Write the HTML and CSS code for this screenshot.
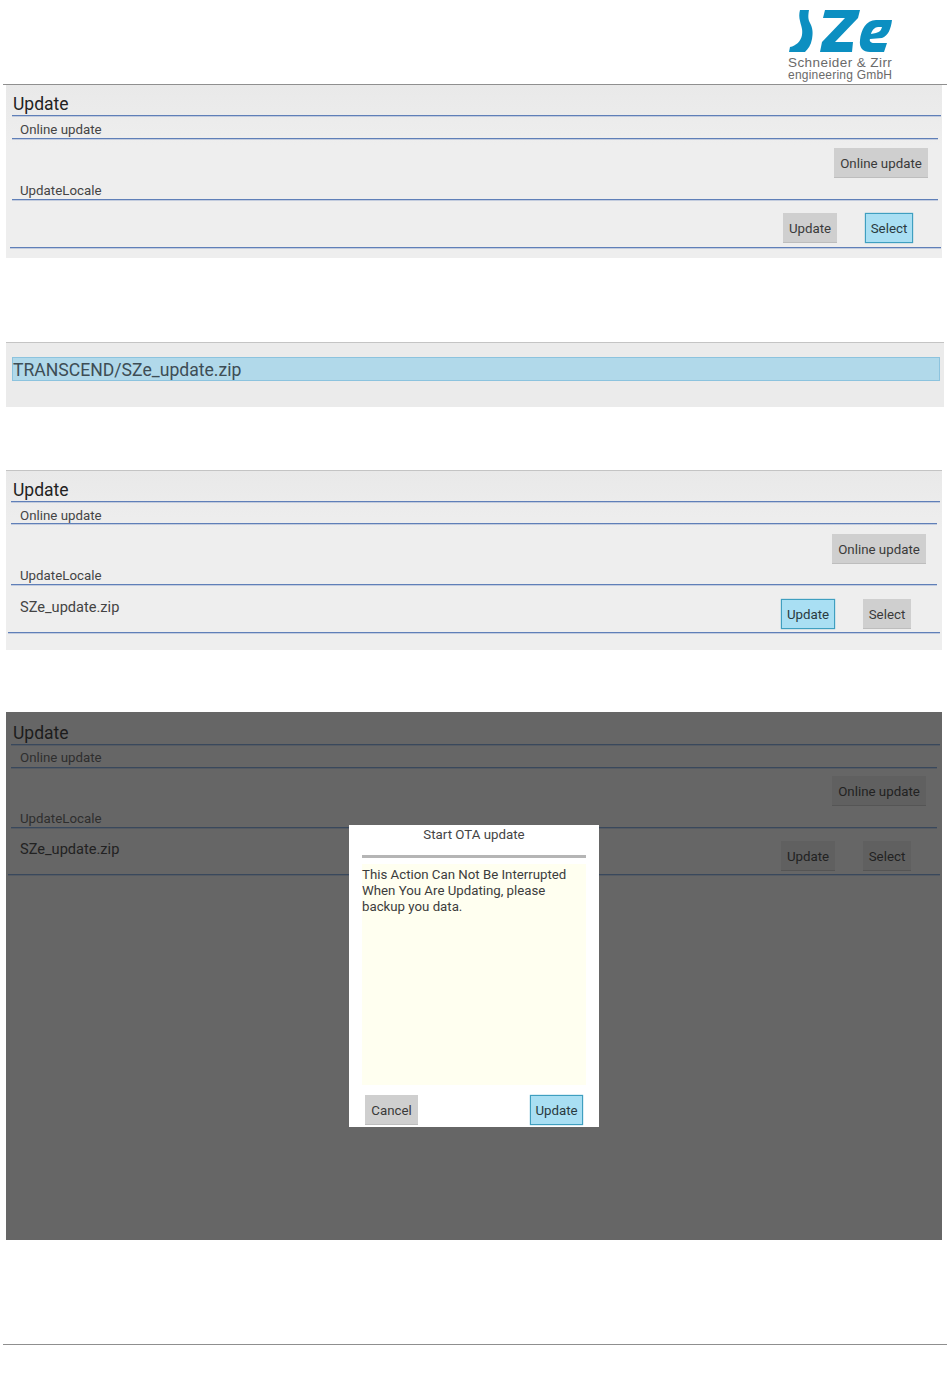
FILE: index.html
```html
<!DOCTYPE html>
<html lang="en">
<head>
<meta charset="utf-8">
<title>Update</title>
<link rel="stylesheet" href="styles.css">
</head>
<body>
<header class="doc-head">
  <div class="logo">
    <svg class="logo-mark" viewBox="0 0 106 42" width="106" height="42" aria-hidden="true">
      <path class="logo-fill" d="M12 0H21C20 6 20 9 22 13C25 18 25 24 24 29C23 35 20 39 17 42H1L2 37C8 36 13 31 14 25C15 19 13 16 12 11C11 7 11 4 12 0Z"/>
      <path class="logo-fill" d="M37 0H72L70 8L47 32H65L64 42H32L34 32L57 8H35Z"/>
      <path class="logo-fill" fill-rule="evenodd" d="M104 10H88C78 10 73 20 72 30C71 38 75 42 82 42H96L99 33H86C83 33 81 31 82 29L94 28C100 26 103 19 104 10ZM94 17C93 21 91 22 88 23L83 24C84 20 87 17 90 17Z"/>
    </svg>
    <div class="logo-name">Schneider &amp; Zirr</div>
    <div class="logo-sub">engineering GmbH</div>
  </div>
</header>

<section class="shot shot-first">
  <h1 class="title">Update</h1>
  <h2 class="sub sub-first">Online update</h2>
  <div class="row row-online"><span class="btn">Online update</span></div>
  <h2 class="sub">UpdateLocale</h2>
  <div class="row row-local">
    <span class="file"></span>
    <span class="btn btn-update">Update</span>
    <span class="btn btn-select btn-on">Select</span>
  </div>
</section>

<section class="shot-path">
  <div class="path-bar">TRANSCEND/SZe_update.zip</div>
</section>

<section class="shot shot-second">
  <h1 class="title">Update</h1>
  <h2 class="sub sub-first">Online update</h2>
  <div class="row row-online"><span class="btn">Online update</span></div>
  <h2 class="sub">UpdateLocale</h2>
  <div class="row row-local">
    <span class="file">SZe_update.zip</span>
    <span class="btn btn-update btn-on">Update</span>
    <span class="btn btn-select">Select</span>
  </div>
</section>

<section class="shot shot-dark">
  <h1 class="title">Update</h1>
  <h2 class="sub sub-first">Online update</h2>
  <div class="row row-online"><span class="btn">Online update</span></div>
  <h2 class="sub">UpdateLocale</h2>
  <div class="row row-local">
    <span class="file">SZe_update.zip</span>
    <span class="btn btn-update">Update</span>
    <span class="btn btn-select">Select</span>
  </div>
  <div class="dialog">
    <div class="dialog-title">Start OTA update</div>
    <div class="dialog-rule"></div>
    <div class="dialog-body">This Action Can Not Be Interrupted When You Are Updating, please backup you data.</div>
    <div class="dialog-actions">
      <span class="btn btn-cancel">Cancel</span>
      <span class="btn btn-update btn-on">Update</span>
    </div>
  </div>
</section>

<footer class="doc-foot"></footer>
</body>
</html>
```
FILE: styles.css
```css
* { box-sizing: border-box; }
html, body { margin: 0; padding: 0; }
body {
  width: 950px;
  height: 1378px;
  overflow: hidden;
  background: #fff;
  font-family: Roboto, "Liberation Sans", sans-serif;
  color: #3c3c3c;
}

.doc-head {
  height: 85px;
  margin: 0 3px;
  border-bottom: 1px solid #8f8f8f;
  display: flex;
  justify-content: flex-end;
  padding: 10px 53px 0 0;
}
.logo { width: 106px; color: #6a6a6a; font-family: "Liberation Sans", sans-serif; }
.logo-mark { display: block; }
.logo-fill { fill: #0c8fc1; }
.logo-name { font-size: 13.5px; line-height: 13px; margin-top: 4px; letter-spacing: 0.42px; white-space: nowrap; }
.logo-sub { font-size: 12px; line-height: 13px; letter-spacing: 0.22px; white-space: nowrap; }

.shot {
  position: relative;
  margin-left: 6px;
  width: 936px;
  background: linear-gradient(#e9e9e9, #eeeeee 60px, #eeeeee);
  --rule: #5f7fb8;
  --rule-soft: rgba(95, 127, 184, 0.3);
}
.title {
  margin: 0;
  font-weight: 400;
  font-size: 17.5px;
  line-height: 22px;
  color: #222;
  padding-left: 1px;
  border-bottom: 1px solid var(--rule);
  box-shadow: 0 1px 0 var(--rule-soft);
}
.sub {
  margin: 0;
  font-weight: 400;
  font-size: 13.3px;
  line-height: 15px;
  color: #444;
  padding-left: 8px;
  border-bottom: 1px solid var(--rule);
  box-shadow: 0 1px 0 var(--rule-soft);
}
.row { display: flex; align-items: flex-start; }
.row-online { justify-content: flex-end; }
.row-local { border-bottom: 1px solid var(--rule); box-shadow: 0 1px 0 var(--rule-soft); }
.file { flex: 1; font-size: 14.6px; line-height: 17px; color: #444; padding-left: 10px; }

.btn {
  display: flex;
  align-items: center;
  justify-content: center;
  height: 30px;
  padding-top: 1px;
  background: #cfcfcf;
  border-bottom: 1px solid #bdbdbd;
  font-size: 13.3px;
  color: #3a3a3a;
  white-space: nowrap;
}
.row-online .btn { width: 94px; }
.btn-update { width: 54px; }
.btn-select { width: 48px; margin-left: 28px; }
.btn-cancel { width: 53px; }
.btn-on { padding-top: 0; background: #a9dff3; border: 1px solid #3f9fc0; box-shadow: 0 0 1px #3f9fc0; color: #2a3a40; }

.shot-first { height: 173px; padding: 8px 1px 0 6px; }
.shot-first .sub { margin-right: 3px; padding-bottom: 1px; }
.shot-first .sub-first { margin-top: 5px; padding-top: 1px; }
.shot-first .row-online { height: 44px; padding: 9px 13px 0 0; }
.shot-first .row-local { height: 48px; padding: 13px 28px 0 4px; margin-left: -2px; }

.shot-path {
  margin: 84px 0 0 6px;
  width: 938px;
  height: 65px;
  background: #ebebeb;
  border-top: 1px solid #c4c4c4;
  padding: 14px 4px 0 6px;
}
.path-bar {
  height: 24px;
  background: #b1d9ea;
  border: 1px solid #8cc3de;
  font-size: 17.6px;
  line-height: 24px;
  color: #3d4d55;
}

.shot-second {
  margin-top: 63px;
  height: 180px;
  border-top: 1px solid #c4c4c4;
  padding: 8px 2px 0 5px;
}
.shot-second .title { padding-left: 2px; }
.shot-second .sub { margin-right: 3px; padding: 0 0 1px 9px; }
.shot-second .sub-first { margin-top: 6px; padding-bottom: 0; }
.shot-second .row-online { height: 44px; padding: 10px 14px 0 0; }
.shot-second .row-local { height: 48px; padding: 14px 29px 0 4px; margin-left: -3px; }
.shot-second .file { padding: 0 0 0 8px; }

.shot-dark {
  margin-top: 62px;
  height: 528px;
  background: #666;
  --rule: #39485c;
  --rule-soft: rgba(57, 72, 92, 0.35);
  color: #222;
  padding: 10px 2px 0 5px;
}
.shot-dark .title { color: #1c1c1c; padding-left: 2px; }
.shot-dark .sub { color: #2e2e2e; margin-right: 3px; padding: 0 0 1px 9px; }
.shot-dark .sub-first { margin-top: 5px; padding-bottom: 2px; }
.shot-dark .row-online { height: 43px; padding: 8px 14px 0 0; }
.shot-dark .row-local { height: 47px; padding: 13px 29px 0 4px; margin-left: -3px; }
.shot-dark .file { color: #222; padding: 0 0 0 8px; }
.shot-dark .row .btn { background: #606060; border-bottom-color: #555; color: #222; }

.dialog {
  position: absolute;
  left: 343px;
  top: 113px;
  width: 250px;
  height: 302px;
  background: #fff;
  display: flex;
  flex-direction: column;
  padding: 0 13px;
}
.dialog-title { text-align: center; font-size: 13.3px; line-height: 20px; color: #444; height: 30px; }
.dialog-rule { height: 3px; background: #b5b5b5; }
.dialog-body {
  margin-top: 6px;
  height: 221px;
  background: #fffff0;
  font-size: 13.25px;
  line-height: 16px;
  color: #3c3c3c;
  padding: 3px 16px 0 0;
}
.dialog-actions { display: flex; justify-content: space-between; padding: 10px 3px 0; }
.dialog-actions .btn-update { width: 53px; }

.doc-foot { margin: 104px 3px 0; border-top: 1px solid #8f8f8f; }
```
